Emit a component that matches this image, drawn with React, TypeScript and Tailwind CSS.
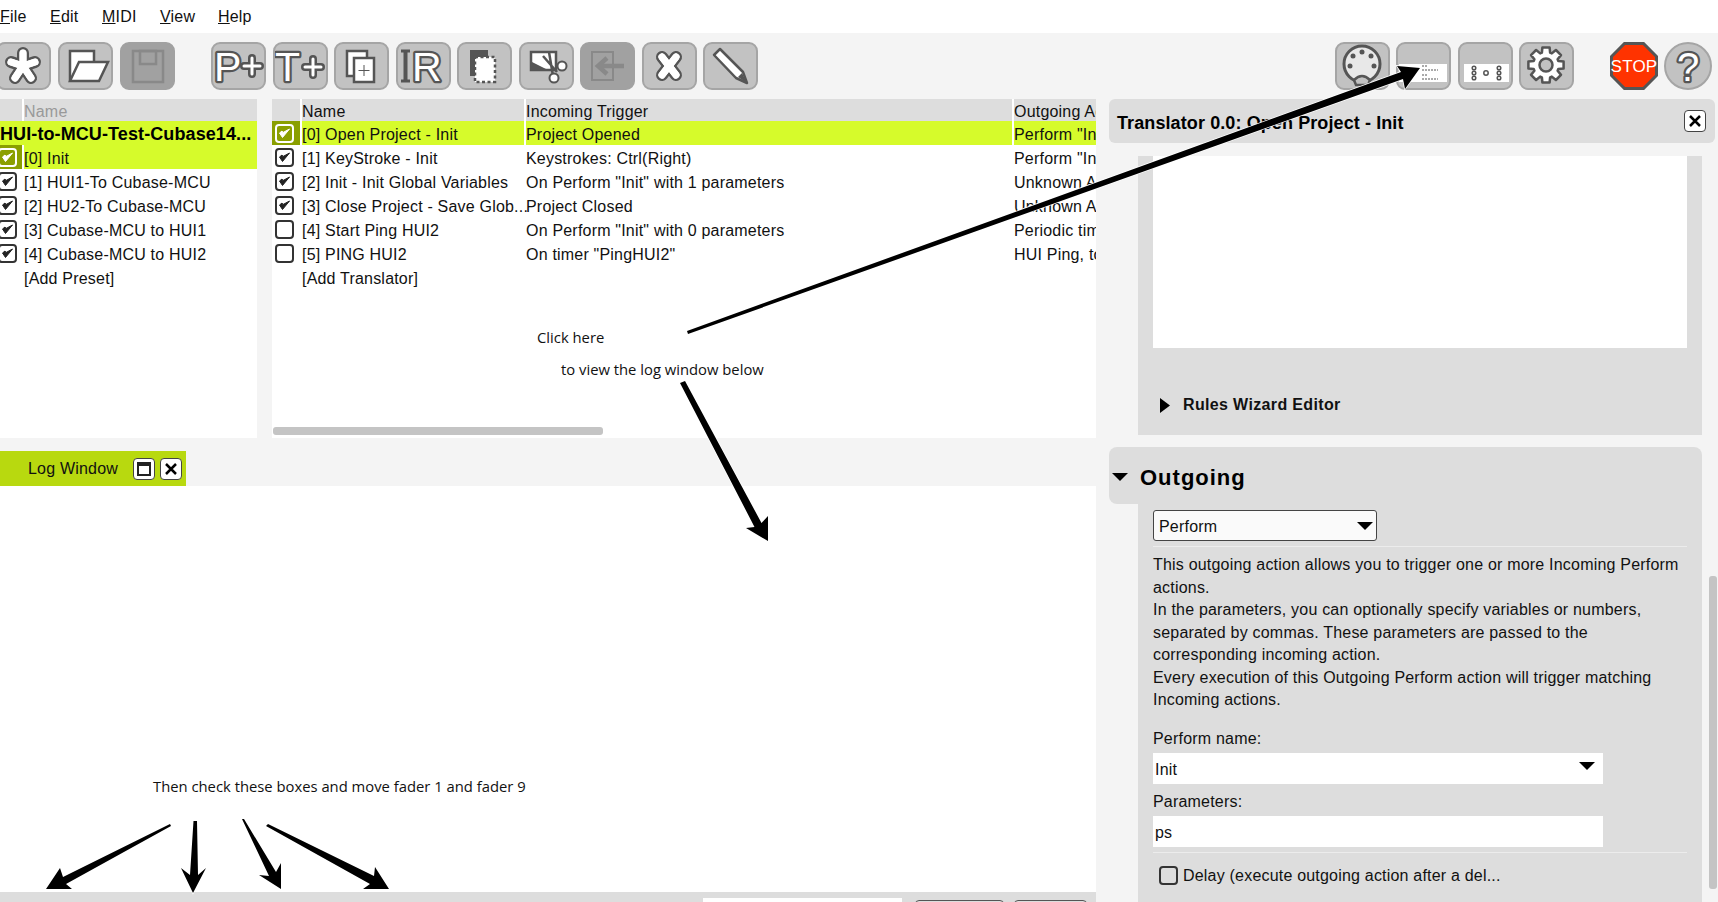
import type { ReactNode } from "react";

const DARK = "#555555";
const DIM = "#898989";

const gearPath = (cx: number, cy: number) => {
  const pts: string[] = [];
  for (let i = 0; i < 8; i++) {
    const a = (i * Math.PI) / 4 - Math.PI / 2;
    const p = (r: number, d: number) =>
      `${(cx + r * Math.cos(a + d)).toFixed(1)},${(cy + r * Math.sin(a + d)).toFixed(1)}`;
    pts.push(p(13, -0.32), p(18, -0.2), p(18, 0.2), p(13, 0.32));
  }
  return pts.join(" ");
};

const ToolButton = ({ children, disabled }: { children: ReactNode; disabled?: boolean }) => (
  <div
    className={`w-[55px] h-[48px] shrink-0 rounded-[9px] border-2 ${
      disabled ? "bg-[#a1a1a1] border-[#a1a1a1]" : "bg-[#c2c2c2] border-[#a5a5a5]"
    }`}
  >
    <svg width="51" height="44" viewBox="2 2 51 44">
      {children}
    </svg>
  </div>
);

const Dual = ({ lines, w = 10 }: { lines: number[][]; w?: number }) => (
  <g strokeLinecap="round" fill="none">
    {lines.map((l, i) => (
      <line key={i} x1={l[0]} y1={l[1]} x2={l[2]} y2={l[3]} stroke={DARK} strokeWidth={w} />
    ))}
    {lines.map((l, i) => (
      <line key={i} x1={l[0]} y1={l[1]} x2={l[2]} y2={l[3]} stroke="white" strokeWidth={w - 5} />
    ))}
  </g>
);

const OutlineText = ({ x, y, size, children, fill = "white" }: { x: number; y: number; size: number; children: string; fill?: string }) => (
  <text
    x={x}
    y={y}
    fontSize={size}
    fontFamily="Liberation Sans, sans-serif"
    fill={fill}
    stroke={DARK}
    strokeWidth="4.5"
    strokeLinejoin="round"
    paintOrder="stroke"
  >
    {children}
  </text>
);

const Plus = ({ x, y }: { x: number; y: number }) => (
  <Dual w={8} lines={[[x - 8, y, x + 8, y], [x, y - 8, x, y + 8]]} />
);

const Check = ({ checked, active, left }: { checked: boolean; active?: boolean; left?: boolean }) => (
  <div
    className={`w-[19px] h-[19px] rounded-[4px] border-2 flex items-center justify-center ${
      active ? "border-white" : "border-[#333333] bg-white"
    } ${left ? "-ml-[2px]" : ""}`}
  >
    {checked && (
      <svg width="13" height="12" viewBox="0 0 13 12">
        <path d="M1.5 6 L4.5 10.5 L11.5 2 L5 5.5 L4 4 Z" fill={active ? "white" : "#222222"} stroke={active ? "white" : "#222222"} strokeWidth="1" />
      </svg>
    )}
  </div>
);

const presets = ["[1] HUI1-To Cubase-MCU", "[2] HU2-To Cubase-MCU", "[3] Cubase-MCU to HUI1", "[4] Cubase-MCU to HUI2"];

const translators = [
  { c: true, n: "[1] KeyStroke - Init", i: "Keystrokes: Ctrl(Right)", o: 'Perform "Init"' },
  { c: true, n: "[2] Init - Init Global Variables", i: 'On Perform "Init" with 1 parameters', o: "Unknown Action" },
  { c: true, n: "[3] Close Project - Save Glob...", i: "Project Closed", o: "Unknown Action" },
  { c: false, n: "[4] Start Ping HUI2", i: 'On Perform "Init" with 0 parameters', o: "Periodic timer" },
  { c: false, n: "[5] PING HUI2", i: 'On timer "PingHUI2"', o: "HUI Ping, to HUI2" },
];

const Triangle = ({ cls }: { cls: string }) => (
  <svg className={cls} viewBox="0 0 16 8" preserveAspectRatio="none">
    <path d="M0 0 H16 L8 8 Z" fill="black" />
  </svg>
);

const Arrow = ({ points }: { points: string }) => (
  <polygon points={points} fill="black" stroke="white" strokeWidth="1.5" paintOrder="stroke" />
);

const App = () => {
  return (
    <div className="relative w-[1718px] h-[902px] overflow-hidden bg-[#f4f4f4] flex flex-col text-[16px] tracking-[0.2px] text-[#111111] font-['Liberation_Sans',Arial,sans-serif]">
      {/* menu */}
      <div className="h-[33px] bg-white flex items-center shrink-0 pt-[1px]">
        <span className="w-[50px]"><u>F</u>ile</span>
        <span className="w-[52px]"><u>E</u>dit</span>
        <span className="w-[58px]"><u>M</u>IDI</span>
        <span className="w-[58px]"><u>V</u>iew</span>
        <span><u>H</u>elp</span>
      </div>

      {/* toolbar */}
      <div className="h-[66px] shrink-0 flex pt-[9px] pr-[6px]">
        <div className="flex gap-[7px] -ml-[4px]">
          <ToolButton>
            <Dual w={12} lines={[[27, 24, 27, 11], [27, 24, 39, 20], [27, 24, 35, 36], [27, 24, 19, 36], [27, 24, 15, 20]]} />
            <path d="M27 24 L27 11 M27 24 L39 20 M27 24 L35 36 M27 24 L19 36 M27 24 L15 20" stroke="white" strokeWidth="7" strokeLinecap="round" />
          </ToolButton>
          <ToolButton>
            <g stroke={DARK} strokeWidth="2.5" fill="white">
              <path d="M12 39 V9 H36 V20" />
              <path d="M21 20 H50 L41 39 H12 Z" />
            </g>
          </ToolButton>
          <ToolButton disabled>
            <g stroke={DIM} strokeWidth="2.5" fill="none">
              <rect x="13" y="9" width="30" height="31" />
              <rect x="20" y="9" width="16" height="13" />
            </g>
          </ToolButton>
        </div>
        <div className="flex gap-[6.5px] ml-[36px]">
          <ToolButton>
            <OutlineText x={3} y={39} size={41}>P</OutlineText>
            <Plus x={41} y={24} />
          </ToolButton>
          <ToolButton>
            <OutlineText x={2} y={39} size={41}>T</OutlineText>
            <Plus x={40} y={25} />
          </ToolButton>
          <ToolButton>
            <rect x="13" y="9" width="20" height="25" fill="white" stroke={DARK} strokeWidth="2.5" />
            <rect x="20" y="16" width="20" height="24" fill="white" stroke={DARK} strokeWidth="2.5" />
            <path d="M30 23 V34 M24.5 28.5 H35.5" stroke={DARK} strokeWidth="1" />
          </ToolButton>
          <ToolButton>
            <path d="M9.5 9 V38" stroke={DARK} strokeWidth="4" />
            <path d="M5 9 H14 M5 39 H14" stroke={DARK} strokeWidth="3" />
            <OutlineText x={16} y={39} size={41}>R</OutlineText>
          </ToolButton>
          <ToolButton>
            <path d="M13 8 H31 V34 H13 Z" fill={DARK} />
            <rect x="18" y="15" width="20" height="25" fill="white" stroke={DARK} strokeWidth="2.5" strokeDasharray="3 2.5" />
          </ToolButton>
          <ToolButton>
            <path d="M12 10 H37 V28 H12 Z" fill="white" stroke={DARK} strokeWidth="2.5" />
            <path d="M13 20 L27 27 H13 Z" fill={DARK} />
            <path d="M24 14 L38 30 M34 34 L30 10" stroke={DARK} strokeWidth="2.5" />
            <circle cx="43" cy="24" r="4.5" fill="white" stroke={DARK} strokeWidth="2" />
            <circle cx="35" cy="36" r="4.5" fill="white" stroke={DARK} strokeWidth="2" />
          </ToolButton>
          <ToolButton disabled>
            <rect x="12" y="10" width="21" height="28" fill="none" stroke={DIM} strokeWidth="2" />
            <path d="M44 24 H21 M27 16 L18 24 L27 32" fill="none" stroke={DIM} strokeWidth="4.5" />
          </ToolButton>
          <ToolButton>
            <Dual w={12} lines={[[20, 15, 34, 33], [34, 15, 20, 33]]} />
            <path d="M20 15 L34 33 M34 15 L20 33" stroke="white" strokeWidth="7" strokeLinecap="round" />
          </ToolButton>
          <ToolButton>
            <path d="M11 13 L17 7 L40 30 L44 41 L33 36 Z" fill="white" stroke={DARK} strokeWidth="2.5" strokeLinejoin="round" />
            <path d="M35 35 L39 31 L44 41 Z" fill={DARK} />
          </ToolButton>
        </div>
        <div className="flex gap-[6.5px] ml-auto">
          <ToolButton>
            <circle cx="27" cy="22" r="18" fill="#e8e8e8" stroke={DARK} strokeWidth="3" />
            <path d="M19 38 Q27 30 35 38 L33 43 H21 Z" fill="#c2c2c2" stroke={DARK} strokeWidth="2.5" />
            <g fill={DARK}>
              <circle cx="15" cy="24" r="2.5" />
              <circle cx="18" cy="14" r="2.5" />
              <circle cx="27" cy="10" r="2.5" />
              <circle cx="36" cy="14" r="2.5" />
              <circle cx="39" cy="24" r="2.5" />
            </g>
          </ToolButton>
          <ToolButton>
            <rect x="3" y="22" width="48" height="18" fill="white" />
            <path d="M26 24 H32 M26 28 H42 M26 33 H32 M26 37 H42" stroke={DARK} strokeWidth="1" strokeDasharray="2 1" />
          </ToolButton>
          <ToolButton>
            <rect x="6" y="22" width="45" height="18" fill="white" />
            <g fill="white" stroke={DARK} strokeWidth="1.5">
              <circle cx="16" cy="26" r="1.8" />
              <circle cx="16" cy="31" r="1.8" />
              <circle cx="16" cy="36" r="1.8" />
              <circle cx="28" cy="31" r="2.2" />
              <circle cx="41" cy="26" r="1.8" />
              <circle cx="41" cy="31" r="1.8" />
              <circle cx="41" cy="36" r="1.8" />
            </g>
          </ToolButton>
          <ToolButton>
            <polygon points={gearPath(27, 23)} fill="white" stroke={DARK} strokeWidth="2.5" strokeLinejoin="round" />
            <circle cx="27" cy="23" r="6.5" fill="#c2c2c2" stroke={DARK} strokeWidth="2.5" />
          </ToolButton>
        </div>
        <div className="flex gap-[6px] ml-[36px]">
          <svg width="48" height="48" viewBox="0 0 48 48">
            <polygon points="14.5,1.5 33.5,1.5 46.5,14.5 46.5,33.5 33.5,46.5 14.5,46.5 1.5,33.5 1.5,14.5" fill="#ff3300" stroke={DARK} strokeWidth="3" />
            <text x="24" y="30" textAnchor="middle" fontSize="17" fill="white" fontFamily="Liberation Sans, sans-serif">STOP</text>
          </svg>
          <div className="w-[48px] h-[48px] rounded-full bg-[#c2c2c2] border-2 border-[#a5a5a5]">
            <svg width="44" height="44" viewBox="0 0 44 44">
              <OutlineText x={11} y={37} size={40}>?</OutlineText>
            </svg>
          </div>
        </div>
      </div>

      {/* main */}
      <div className="flex-1 flex min-h-0">
        <div className="w-[1096px] flex flex-col shrink-0">
          <div className="h-[339px] flex gap-[15px] shrink-0">
            {/* presets */}
            <div className="w-[257px] bg-white">
              <div className="h-[22px] flex bg-[#dddddd] leading-[26px] text-[#999999]">
                <div className="w-[22px]" />
                <div className="flex-1 border-l-2 border-white">Name</div>
              </div>
              <div className="h-[24px] bg-[#d6fb2b] font-bold text-[18px] tracking-[0.1px] leading-[26px] whitespace-nowrap overflow-hidden text-black">
                HUI-to-MCU-Test-Cubase14...
              </div>
              <div className="h-[24px] flex leading-[27px]">
                <div className="w-[22px] bg-[#8a9f00] flex items-center"><Check checked active left /></div>
                <div className="flex-1 ml-[2px] bg-[#d6fb2b]">[0] Init</div>
              </div>
              {presets.map((p) => (
                <div key={p} className="h-[24px] flex leading-[27px]">
                  <div className="w-[24px] flex items-center"><Check checked left /></div>
                  <div>{p}</div>
                </div>
              ))}
              <div className="h-[24px] pl-[24px] leading-[27px]">[Add Preset]</div>
            </div>

            {/* translators */}
            <div className="flex-1 bg-white flex flex-col min-w-0">
              <div className="grid grid-cols-[28px_224px_488px_1fr] grid-rows-[22px] h-[22px] bg-[#dddddd] leading-[26px]">
                <div />
                <div className="border-l-2 border-white">Name</div>
                <div className="border-l-2 border-white">Incoming Trigger</div>
                <div className="border-l-2 border-white overflow-hidden whitespace-nowrap">Outgoing Actions</div>
              </div>
              <div className="grid grid-cols-[28px_224px_488px_1fr] grid-rows-[24px] h-[24px] leading-[27px]">
                <div className="bg-[#8a9f00] flex items-center pl-[3px]"><Check checked active /></div>
                <div className="ml-[2px] bg-[#d6fb2b]">[0] Open Project - Init</div>
                <div className="ml-[2px] bg-[#d6fb2b]">Project Opened</div>
                <div className="ml-[2px] bg-[#d6fb2b] overflow-hidden whitespace-nowrap">Perform "Init"</div>
              </div>
              {translators.map((t) => (
                <div key={t.n} className="grid grid-cols-[28px_224px_488px_1fr] grid-rows-[24px] h-[24px] leading-[27px]">
                  <div className="flex items-center pl-[3px]"><Check checked={t.c} /></div>
                  <div className="pl-[2px] whitespace-nowrap">{t.n}</div>
                  <div className="pl-[2px]">{t.i}</div>
                  <div className="pl-[2px] overflow-hidden whitespace-nowrap">{t.o}</div>
                </div>
              ))}
              <div className="h-[24px] pl-[30px] leading-[27px]">[Add Translator]</div>
              <div className="flex-1 flex flex-col justify-end pb-[3px] pl-[1px]">
                <div className="w-[330px] h-[8px] rounded-[3px] bg-[#c4c4c4]" />
              </div>
            </div>
          </div>

          {/* log */}
          <div className="h-[13px] shrink-0" />
          <div className="h-[35px] shrink-0 flex">
            <div className="w-[186px] bg-[#b8d90f] flex items-center pl-[28px]">
              <span className="w-[105px]">Log Window</span>
              <div className="w-[22px] h-[22px] rounded-[4px] border-[1.5px] border-[#444444] bg-white flex items-center justify-center">
                <div className="w-[14px] h-[14px] border-2 border-t-[4px] border-[#222222] bg-white" />
              </div>
              <div className="w-[22px] h-[22px] ml-[5px] rounded-[4px] border-[1.5px] border-[#444444] bg-white flex items-center justify-center">
                <svg width="12" height="12" viewBox="0 0 12 12"><path d="M1 1 L11 11 M11 1 L1 11" stroke="black" strokeWidth="2.5" /></svg>
              </div>
            </div>
          </div>
          <div className="flex-1 bg-white" />
          <div className="h-[10px] shrink-0 bg-[#dddddd] overflow-hidden flex pt-[6px]">
            <div className="ml-[703px] w-[199px] h-[20px] bg-white shrink-0" />
            <div className="ml-[13px] mt-[2px] w-[89px] h-[20px] rounded-[4px] border-[1.5px] border-[#555555] shrink-0" />
            <div className="ml-[10px] mt-[2px] w-[73px] h-[20px] rounded-[4px] border-[1.5px] border-[#555555] shrink-0" />
          </div>
        </div>

        {/* right side */}
        <div className="flex-1 ml-[13px] flex flex-col min-w-0">
          <div className="h-[44px] mr-[3px] shrink-0 rounded-[6px] bg-[#dddddd] flex items-center justify-between pl-[8px] pr-[9px]">
            <span className="font-bold text-[18px] tracking-[0.1px] text-black pt-[4px]">Translator 0.0: Open Project - Init</span>
            <div className="w-[22px] h-[22px] rounded-[4px] border-[1.5px] border-[#444444] bg-white flex items-center justify-center">
              <svg width="12" height="12" viewBox="0 0 12 12"><path d="M1 1 L11 11 M11 1 L1 11" stroke="black" strokeWidth="2.5" /></svg>
            </div>
          </div>
          <div className="flex-1 mt-[13px] flex min-h-0">
            <div className="w-[593px] flex flex-col shrink-0">
              <div className="ml-[29px] h-[279px] bg-[#dddddd] px-[15px] shrink-0">
                <div className="h-[192px] bg-white" />
                <div className="flex items-center h-[58px] mt-[28px] pl-[7px]">
                  <svg width="10" height="15" viewBox="0 0 10 15"><path d="M0 0 L10 7.5 L0 15 Z" fill="black" /></svg>
                  <span className="ml-[13px] font-bold tracking-[0.35px]">Rules Wizard Editor</span>
                </div>
              </div>
              <div className="mt-[12px] h-[57px] shrink-0 bg-[#dddddd] rounded-t-[8px] rounded-bl-[8px] flex items-center pl-[3px] pt-[2px]">
                <Triangle cls="w-[16px] h-[8px]" />
                <span className="ml-[12px] pt-[2px] font-bold text-[22px] tracking-[1px] text-black">Outgoing</span>
              </div>
              <div className="ml-[29px] flex-1 bg-[#dddddd] px-[15px] pt-[6px]">
                <div className="w-[224px] h-[31px] rounded-[3px] border-[1.5px] border-[#444444] bg-[#fafafa] flex items-center justify-between pl-[5px] pr-[3px]">
                  <span className="pt-[2px]">Perform</span>
                  <Triangle cls="w-[16px] h-[8px]" />
                </div>
                <div className="h-px bg-[#ececec] mt-[5px]" />
                <div className="mt-[7px] leading-[22.5px]">
                  <p>This outgoing action allows you to trigger one or more Incoming Perform actions.</p>
                  <p>In the parameters, you can optionally specify variables or numbers, separated by commas. These parameters are passed to the corresponding incoming action.</p>
                  <p>Every execution of this Outgoing Perform action will trigger matching Incoming actions.</p>
                </div>
                <div className="mt-[16px] leading-[22px]">Perform name:</div>
                <div className="mt-[3px] w-[450px] h-[31px] bg-white flex items-center justify-between pl-[2px] pr-[8px]">
                  <span className="pt-[4px]">Init</span>
                  <Triangle cls="w-[16px] h-[8px] -mt-[4px]" />
                </div>
                <div className="mt-[8px] leading-[20px]">Parameters:</div>
                <div className="mt-[4px] w-[450px] h-[31px] bg-white flex items-center pl-[2px] pt-[4px]">ps</div>
                <div className="h-px bg-[#ececec] mt-[5px]" />
                <div className="mt-[11px] flex items-center pl-[6px]">
                  <div className="w-[19px] h-[19px] rounded-[4px] border-2 border-[#333333]" />
                  <span className="ml-[5px]">Delay (execute outgoing action after a del...</span>
                </div>
              </div>
            </div>
            <div className="ml-[7px] mt-[420px] mb-[13px] w-[8px] rounded-[3px] bg-[#c4c4c4]" />
          </div>
        </div>
      </div>

      {/* annotations pasted over the screenshot */}
      <span className="absolute left-[537px] top-[327px] text-[14.8px] tracking-normal leading-[20px] font-['Open_Sans',sans-serif]">Click here</span>
      <span className="absolute left-[561px] top-[359px] text-[14.8px] tracking-normal leading-[20px] font-['Open_Sans',sans-serif]">to view the log window below</span>
      <span className="absolute left-[153px] top-[776px] text-[14.8px] tracking-normal leading-[20px] font-['Open_Sans',sans-serif]">Then check these boxes and move fader 1 and fader 9</span>
      <svg className="absolute inset-0 pointer-events-none" width="1718" height="902" viewBox="0 0 1718 902">
        <Arrow points="687,331 1401,72 1397,66 1420,68 1405,89 1403,79 688,334" />
        <Arrow points="685,381 761.5,523 768,516 768,541 746,528 754.5,527 680,383" />
        <Arrow points="170,824 63,877 60,868 46,889 72,889 66,884 171,826" />
        <Arrow points="197,821 198,875 206,868 193,893 181,868 190,875 193.5,821" />
        <Arrow points="244,819 276,872 281,863 281,889 259,875 269,876 242,819" />
        <Arrow points="268,824 374,876 375,867 389,889 363,889 370,884 266,826" />
      </svg>
    </div>
  );
};

export default App;
